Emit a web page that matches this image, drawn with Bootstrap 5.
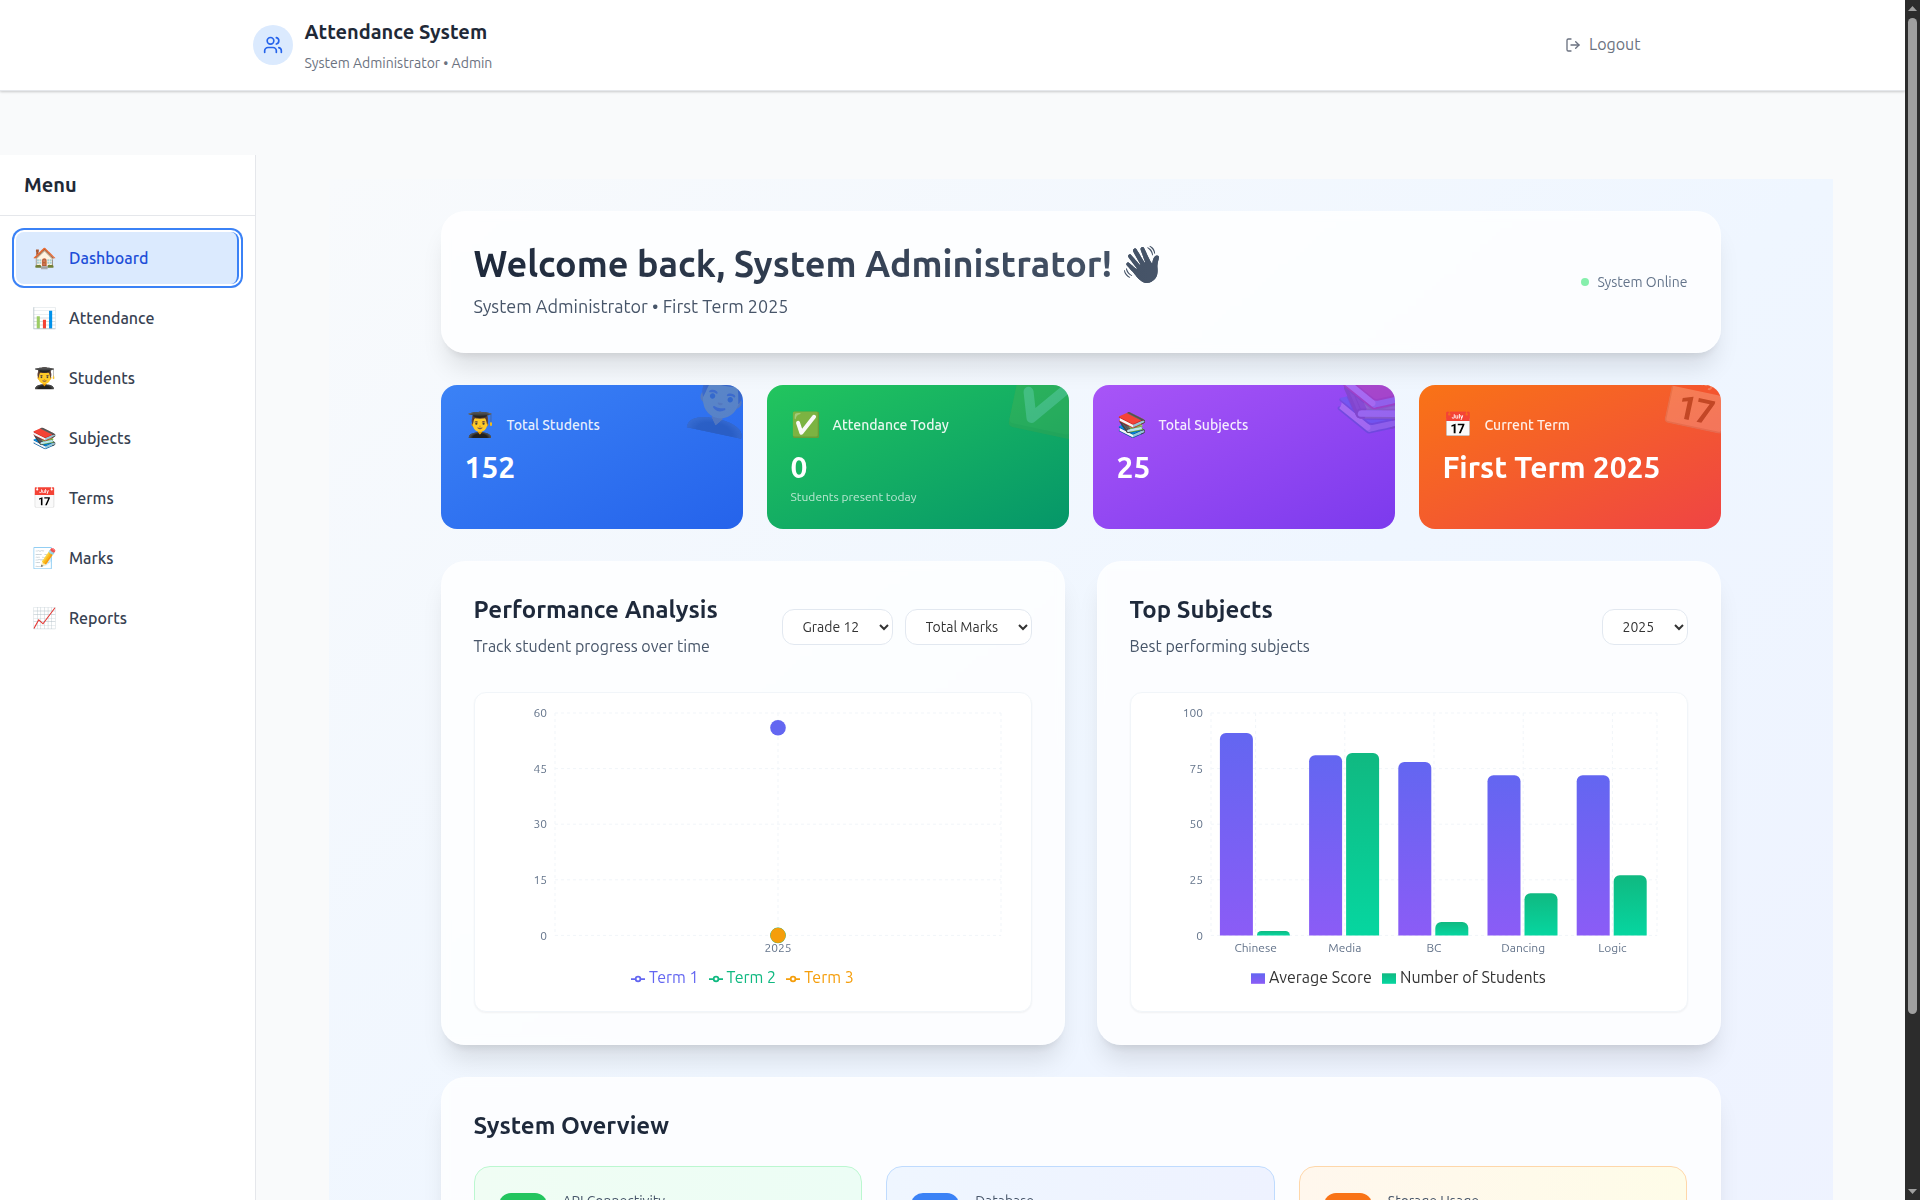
<!DOCTYPE html>
<html lang="en">
<head>
<meta charset="utf-8">
<meta name="viewport" content="width=device-width, initial-scale=1">
<title>Attendance System</title>
<link href="https://cdn.jsdelivr.net/npm/bootstrap@5.3.0/dist/css/bootstrap.min.css" rel="stylesheet">
<style>
  :root { --ink: #1e293b; --slate: #475569; }
  html, body { height: 1200px; overflow: hidden; }
  body { font-family: Ubuntu, "Open Sans", "Noto Sans", sans-serif; background: #f9fafb; color: #1f2937; font-size: 16px; line-height: 24px; }
  h1, h2, h3, p { margin: 0; }
  .page-shell { height: 1200px; }
  .page-view { height: 1200px; overflow: hidden; }

  .top-bar { height: 91px; background: #fff; border-bottom: 1px solid #e5e7eb; box-shadow: 0 1px 3px rgba(0,0,0,.1), 0 1px 2px rgba(0,0,0,.1); position: relative; }
  .top-inner { width: 1400px; }
  .brand-mark { width: 40px; height: 40px; background: #dbeafe; color: #2563eb; }
  .brand-name { font-size: 20px; font-weight: 600; line-height: 28px; color: #1f2937; }
  .brand-sub { font-size: 14px; line-height: 20px; color: #6b7280; margin-top: 7px; }
  .logout-link { color: #6b7280; padding: 8px 12px; gap: 8px; text-decoration: none; }
  .logout-link span { padding-bottom: 2px; }

  .stage { padding-top: 64px; height: 1109px; }
  .side-nav { width: 256px; background: #fff; border-right: 1px solid #e5e7eb; }
  .side-title { height: 61px; padding: 0 24px; border-bottom: 1px solid #e5e7eb; font-size: 20px; font-weight: 600; color: #1f2937; }
  .side-list { padding: 16px; gap: 8px; }
  .side-item { height: 52px; padding: 0 16px; border-radius: 12px; color: #374151; font-weight: 500; text-decoration: none; }
  .side-item .emo { font-size: 20px; width: 25px; margin-right: 12px; line-height: 28px; }
  .side-item.current { background: #dbeafe; color: #1d4ed8; border-right: 2px solid #3b82f6; box-shadow: 0 0 0 2px #fff, 0 0 0 4px #3b82f6; border-radius: 8px; }

  .content-pane { width: 1504px; margin: 24px 0 0 72.5px; height: 1227px; padding: 32px 112px; background: linear-gradient(to bottom right, #f8fafc, #eff6ff, #eef2ff); }
  .panel { background: rgba(255,255,255,.8); border: 1px solid rgba(255,255,255,.2); border-radius: 24px; padding: 32px; box-shadow: 0 20px 25px -5px rgba(0,0,0,.1), 0 8px 10px -6px rgba(0,0,0,.1); backdrop-filter: blur(4px); }
  .hello { height: 142px; padding-top: 29px; }
  .hello h1 { font-size: 36px; font-weight: 700; line-height: 45px; background: linear-gradient(to right, #1e293b, #475569); -webkit-background-clip: text; background-clip: text; color: transparent; }
  .hello p { font-size: 18px; line-height: 28px; color: var(--slate); margin-top: 6px; }
  .online { font-size: 14px; color: #64748b; gap: 8px; padding-top: 3px; }
  .online i { width: 8px; height: 8px; border-radius: 50%; background: #86efac; }

  .stat-grid { display: grid; grid-template-columns: repeat(4, 1fr); gap: 24px; margin: 32px 0; }
  .stat-tile { height: 144px; border-radius: 16px; padding: 24px; color: #fff; overflow: hidden; position: relative; }
  .stat-blue { background: linear-gradient(to bottom right, #3b82f6, #2563eb); }
  .stat-green { background: linear-gradient(to bottom right, #22c55e, #059669); }
  .stat-purple { background: linear-gradient(to bottom right, #a855f7, #7c3aed); }
  .stat-orange { background: linear-gradient(to bottom right, #f97316, #ef4444); }
  .stat-ghost { position: absolute; right: -16px; top: -16px; font-size: 60px; line-height: 60px; opacity: .2; transform: rotate(12deg); }
  .stat-head { gap: 12px; height: 32px; }
  .stat-head .emo { font-size: 24px; line-height: 32px; }
  .stat-head .cap { font-size: 14px; font-weight: 500; color: rgba(255,255,255,.9); }
  .stat-num { font-size: 30px; font-weight: 700; line-height: 36px; margin-top: 8px; }
  .stat-note { font-size: 12px; line-height: 16px; margin-top: 4px; color: rgba(255,255,255,.7); }

  .chart-grid { display: grid; grid-template-columns: 1fr 1fr; gap: 32px; margin-bottom: 32px; }
  .chart-panel { height: 484px; }
  .chart-top { height: 66px; margin-bottom: 32px; }
  .chart-title { padding-bottom: 2px; }
  .chart-panel h2, .overview h2 { font-size: 24px; font-weight: 700; line-height: 32px; color: var(--ink); }
  .chart-top p { color: var(--slate); margin-top: 8px; }
  .pick-row { gap: 12px; }
  .pick { height: 36px; border: 1px solid #e2e8f0; border-radius: 12px; background: #fff; color: #333; font: 14px/20px Ubuntu, "Open Sans", sans-serif; padding: 0 0 0 16px; }
  .pick-a { width: 111px; } .pick-b { width: 127px; } .pick-c { width: 86px; }
  .plot { height: 320px; border: 1px solid #f1f5f9; border-radius: 12px; background: #fff; box-shadow: 0 1px 2px rgba(0,0,0,.05); }
  .plot svg { display: block; }
  .plot text { font-family: Ubuntu, "Open Sans", sans-serif; }
  .tick { font-size: 12px; fill: #64748b; }
  .leg { font-size: 16px; }
  .mesh line { stroke: #f1f5f9; stroke-dasharray: 3 3; }

  .overview h2 { margin-bottom: 24px; }
  .over-grid { display: grid; grid-template-columns: repeat(3, 1fr); gap: 24px; }
  .over-tile { border-radius: 16px; border: 1px solid; padding: 24px; gap: 16px; height: 110px; font-size: 14px; line-height: 20px; color: var(--slate); }
  .over-tile b { width: 48px; height: 48px; border-radius: 12px; margin-top: 2px; }
  .over-green { background: linear-gradient(to right, #f0fdf4, #ecfdf5); border-color: #bbf7d0; } .over-green b { background: #22c55e; }
  .over-blue { background: linear-gradient(to right, #eff6ff, #eef2ff); border-color: #bfdbfe; } .over-blue b { background: #3b82f6; }
  .over-orange { background: linear-gradient(to right, #fff7ed, #fefce8); border-color: #fed7aa; } .over-orange b { background: #f97316; }

  .rail { width: 15px; height: 1200px; background: #2c2c2c; padding: 6px 3px; }
  .rail-thumb { width: 9px; height: 996px; border-radius: 5px; background: #9f9f9f; margin-top: 7px; }
</style>
</head>
<body>
<div class="page-shell d-flex">
  <div class="page-view flex-grow-1">
    <header class="top-bar d-flex justify-content-center">
      <div class="top-inner d-flex align-items-center justify-content-between">
        <div class="d-flex align-items-center">
          <div class="brand-mark rounded-circle d-flex align-items-center justify-content-center me-2">
            <svg width="20" height="20" viewBox="0 0 24 24" fill="none" stroke="currentColor" stroke-width="2" stroke-linecap="round" stroke-linejoin="round"><path d="M16 21v-2a4 4 0 0 0-4-4H6a4 4 0 0 0-4 4v2"/><circle cx="9" cy="7" r="4"/><path d="M22 21v-2a4 4 0 0 0-3-3.87"/><path d="M16 3.13a4 4 0 0 1 0 7.75"/></svg>
          </div>
          <div class="ms-1">
            <h1 class="brand-name">Attendance System</h1>
            <p class="brand-sub">System Administrator • Admin</p>
          </div>
        </div>
        <a class="logout-link d-flex align-items-center" href="#">
          <svg width="16" height="16" viewBox="0 0 24 24" fill="none" stroke="currentColor" stroke-width="2" stroke-linecap="round" stroke-linejoin="round"><path d="M9 21H5a2 2 0 0 1-2-2V5a2 2 0 0 1 2-2h4"/><path d="m16 17 5-5-5-5"/><path d="M21 12H9"/></svg>
          <span>Logout</span>
        </a>
      </div>
    </header>

    <div class="stage d-flex">
      <nav class="side-nav flex-shrink-0">
        <div class="side-title d-flex align-items-center">Menu</div>
        <div class="side-list d-flex flex-column">
          <a class="side-item current d-flex align-items-center" href="#"><span class="emo">🏠</span><span>Dashboard</span></a>
          <a class="side-item d-flex align-items-center" href="#"><span class="emo">📊</span><span>Attendance</span></a>
          <a class="side-item d-flex align-items-center" href="#"><span class="emo">👨‍🎓</span><span>Students</span></a>
          <a class="side-item d-flex align-items-center" href="#"><span class="emo">📚</span><span>Subjects</span></a>
          <a class="side-item d-flex align-items-center" href="#"><span class="emo">📅</span><span>Terms</span></a>
          <a class="side-item d-flex align-items-center" href="#"><span class="emo">📝</span><span>Marks</span></a>
          <a class="side-item d-flex align-items-center" href="#"><span class="emo">📈</span><span>Reports</span></a>
        </div>
      </nav>

      <main class="content-pane flex-shrink-0">
        <section class="panel hello d-flex justify-content-between">
          <div>
            <h1>Welcome back, System Administrator! 👋</h1>
            <p>System Administrator • First Term 2025</p>
          </div>
          <div class="online d-flex align-items-center"><i></i><span>System Online</span></div>
        </section>

        <section class="stat-grid">
          <div class="stat-tile stat-blue">
            <div class="stat-ghost">👨‍🎓</div>
            <div class="stat-head d-flex align-items-center"><span class="emo">👨‍🎓</span><span class="cap">Total Students</span></div>
            <div class="stat-num">152</div>
          </div>
          <div class="stat-tile stat-green">
            <div class="stat-ghost">✅</div>
            <div class="stat-head d-flex align-items-center"><span class="emo">✅</span><span class="cap">Attendance Today</span></div>
            <div class="stat-num">0</div>
            <div class="stat-note">Students present today</div>
          </div>
          <div class="stat-tile stat-purple">
            <div class="stat-ghost">📚</div>
            <div class="stat-head d-flex align-items-center"><span class="emo">📚</span><span class="cap">Total Subjects</span></div>
            <div class="stat-num">25</div>
          </div>
          <div class="stat-tile stat-orange">
            <div class="stat-ghost">📅</div>
            <div class="stat-head d-flex align-items-center"><span class="emo">📅</span><span class="cap">Current Term</span></div>
            <div class="stat-num">First Term 2025</div>
          </div>
        </section>

        <section class="chart-grid">
          <div class="panel chart-panel">
            <div class="chart-top d-flex align-items-center justify-content-between">
              <div class="chart-title"><h2>Performance Analysis</h2><p>Track student progress over time</p></div>
              <div class="pick-row d-flex">
                <select class="pick pick-a"><option>Grade 12</option></select>
                <select class="pick pick-b"><option>Total Marks</option></select>
              </div>
            </div>
            <div class="plot">
              <svg width="556" height="318" viewBox="475 693 556 318">
                <g class="mesh">
                  <line x1="555" x2="1001" y1="713" y2="713"/><line x1="555" x2="1001" y1="768.6" y2="768.6"/><line x1="555" x2="1001" y1="824.2" y2="824.2"/><line x1="555" x2="1001" y1="879.8" y2="879.8"/><line x1="555" x2="1001" y1="935.4" y2="935.4"/>
                  <line x1="555" x2="555" y1="713" y2="935.4"/><line x1="778" x2="778" y1="713" y2="935.4"/><line x1="1001" x2="1001" y1="713" y2="935.4"/>
                </g>
                <g class="tick" text-anchor="end">
                  <text x="547" y="717.2">60</text><text x="547" y="772.8">45</text><text x="547" y="828.4">30</text><text x="547" y="884">15</text><text x="547" y="939.6">0</text>
                </g>
                <circle cx="778" cy="727.8" r="7.8" fill="#6366f1"/>
                <circle cx="778" cy="935.4" r="7.8" fill="#10b981"/><circle cx="778" cy="935.4" r="7.7" fill="#f59e0b"/>
                <text class="tick" x="778" y="952" text-anchor="middle">2025</text>
                <g fill="none" stroke-width="1.75">
                  <path stroke="#6366f1" d="M631 979h4.7a2.35 2.35 0 1 1 4.7 0h4.6M640.4 979a2.35 2.35 0 1 1-4.7 0"/>
                  <path stroke="#10b981" d="M709 979h4.7a2.35 2.35 0 1 1 4.7 0h4.6M718.4 979a2.35 2.35 0 1 1-4.7 0"/>
                  <path stroke="#f59e0b" d="M786 979h4.7a2.35 2.35 0 1 1 4.7 0h4.6M795.4 979a2.35 2.35 0 1 1-4.7 0"/>
                </g>
                <g class="leg"><text x="649" y="983" fill="#6366f1">Term 1</text><text x="726.6" y="983" fill="#10b981">Term 2</text><text x="804.2" y="983" fill="#f59e0b">Term 3</text></g>
              </svg>
            </div>
          </div>

          <div class="panel chart-panel">
            <div class="chart-top d-flex align-items-center justify-content-between">
              <div class="chart-title"><h2>Top Subjects</h2><p>Best performing subjects</p></div>
              <select class="pick pick-c"><option>2025</option></select>
            </div>
            <div class="plot">
              <svg width="556" height="318" viewBox="1131 693 556 318">
                <defs>
                  <linearGradient id="gScore" x1="0" y1="0" x2="0" y2="1"><stop offset="0" stop-color="#6366f1"/><stop offset="1" stop-color="#8b5cf6"/></linearGradient>
                  <linearGradient id="gCount" x1="0" y1="0" x2="0" y2="1"><stop offset="0" stop-color="#10b981"/><stop offset="1" stop-color="#06d6a0"/></linearGradient>
                </defs>
                <g class="mesh">
                  <line x1="1211" x2="1657" y1="713" y2="713"/><line x1="1211" x2="1657" y1="768.6" y2="768.6"/><line x1="1211" x2="1657" y1="824.2" y2="824.2"/><line x1="1211" x2="1657" y1="879.8" y2="879.8"/><line x1="1211" x2="1657" y1="935.4" y2="935.4"/>
                  <line x1="1211" x2="1211" y1="713" y2="935.4"/><line x1="1255.6" x2="1255.6" y1="713" y2="935.4"/><line x1="1344.8" x2="1344.8" y1="713" y2="935.4"/><line x1="1434" x2="1434" y1="713" y2="935.4"/><line x1="1523.2" x2="1523.2" y1="713" y2="935.4"/><line x1="1612.4" x2="1612.4" y1="713" y2="935.4"/><line x1="1657" x2="1657" y1="713" y2="935.4"/>
                </g>
                <g class="tick" text-anchor="end">
                  <text x="1203" y="717.2">100</text><text x="1203" y="772.8">75</text><text x="1203" y="828.4">50</text><text x="1203" y="884">25</text><text x="1203" y="939.6">0</text>
                </g>
                <g id="bars"></g>
                <g class="tick" text-anchor="middle">
                  <text x="1255.6" y="952">Chinese</text><text x="1344.8" y="952">Media</text><text x="1434" y="952">BC</text><text x="1523.2" y="952">Dancing</text><text x="1612.4" y="952">Logic</text>
                </g>
                <rect x="1251" y="973.3" width="14" height="10.5" fill="url(#gScore)"/>
                <rect x="1382" y="973.3" width="14" height="10.5" fill="url(#gCount)"/>
                <g class="leg" fill="#333"><text x="1269" y="983">Average Score</text><text x="1400" y="983">Number of Students</text></g>
              </svg>
            </div>
          </div>
        </section>

        <section class="panel overview">
          <h2>System Overview</h2>
          <div class="over-grid">
            <div class="over-tile over-green d-flex"><b></b><span>API Connectivity</span></div>
            <div class="over-tile over-blue d-flex"><b></b><span>Database</span></div>
            <div class="over-tile over-orange d-flex"><b></b><span>Storage Usage</span></div>
          </div>
        </section>
      </main>
    </div>
  </div>
  <div class="rail d-flex flex-column flex-shrink-0">
    <svg width="9" height="5"><path d="M4.5 0 9 5H0z" fill="#9f9f9f"/></svg>
    <div class="rail-thumb"></div>
    <svg class="mt-auto" width="9" height="5"><path d="M4.5 5 9 0H0z" fill="#9f9f9f"/></svg>
  </div>
</div>
<script src="https://cdn.jsdelivr.net/npm/bootstrap@5.3.0/dist/js/bootstrap.bundle.min.js"></script>
<script>
  // Bars are drawn from the score / student-count pairs, 0 to 100 over the plot height.
  const pairs = [[91, 2], [81, 82], [78, 6], [72, 19], [72, 27]];
  const base = 935.4, unit = 2.224, w = 33;
  let marks = '';
  pairs.forEach((pair, i) => pair.forEach((v, k) => {
    const x = 1219.9 + i * 89.2 + k * 37, h = v * unit, r = Math.min(6, h), y = base - h;
    marks += `<path fill="url(#${k ? 'gCount' : 'gScore'})" d="M${x} ${base}V${y + r}a${r} ${r} 0 0 1 ${r} ${-r}h${w - 2 * r}a${r} ${r} 0 0 1 ${r} ${r}V${base}z"/>`;
  }));
  document.getElementById('bars').innerHTML = marks;
</script>
</body>
</html>
